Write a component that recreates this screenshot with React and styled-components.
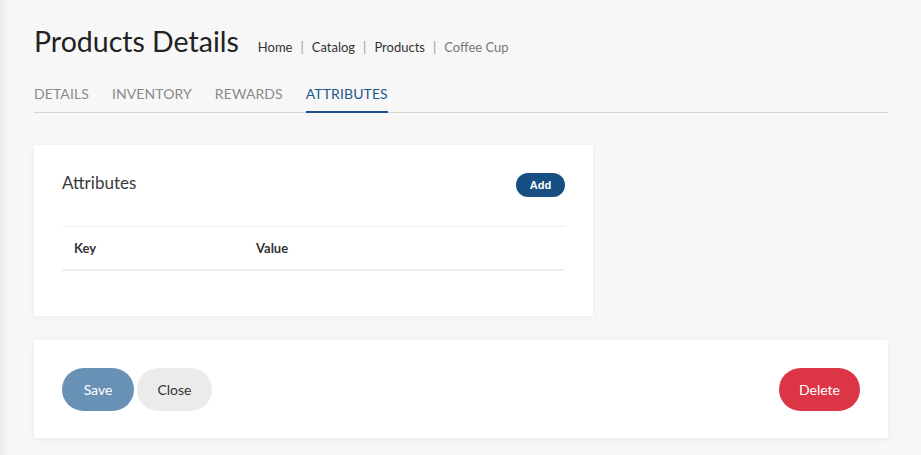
import React from "react";
import styled, { createGlobalStyle } from "styled-components";

const Global = createGlobalStyle`
  html, body { margin: 0; padding: 0; background: #f7f7f7; }
  body { font-family: Lato, "Noto Sans", sans-serif; color: #212529; }
  * { box-sizing: border-box; }
`;

const Page = styled.div`
  min-height: 455px;
  padding: 23px 33px 17px 34px;
  background: #f7f7f7;
  box-shadow: inset 12px 0 12px -10px rgba(0, 0, 0, 0.08);
`;

const Header = styled.div`
  display: flex;
  align-items: baseline;
  gap: 19px;
`;

const Title = styled.h1`
  margin: 0;
  font-size: 28.5px;
  font-weight: 400;
  color: #222;
  line-height: 36px;
`;

const Crumbs = styled.nav`
  display: flex;
  align-items: baseline;
  gap: 8px;
  font-size: 13px;
  color: #333;
`;

const Crumb = styled.span`
  color: ${(p) => (p.$current ? "#777" : "#333")};
`;

const Sep = styled.span`
  color: #999;
`;

const Tabs = styled.div`
  display: flex;
  gap: 23px;
  margin-top: 22px;
  border-bottom: 1px solid #d4d4d4;
`;

const Tab = styled.div`
  font-size: 14px;
  letter-spacing: 0.1px;
  text-transform: uppercase;
  padding: 4px 0 9px;
  color: ${(p) => (p.$active ? "#23578a" : "#8a8a8a")};
  border-bottom: 2px solid ${(p) => (p.$active ? "#1d5088" : "transparent")};
  margin-bottom: -1px;
`;

const Card = styled.section`
  background: #fff;
  box-shadow: 0 1px 6px rgba(0, 0, 0, 0.06);
  width: ${(p) => p.$width || "auto"};
  margin-top: ${(p) => p.$mt || 0}px;
  padding: ${(p) => p.$pad};
`;

const CardHead = styled.div`
  display: flex;
  justify-content: space-between;
  align-items: center;
  height: 28px;
`;

const CardTitle = styled.h2`
  margin: -3px 0 0;
  font-size: 17px;
  font-weight: 400;
  color: #3a3a3a;
`;

const AddButton = styled.button`
  border: none;
  background: #174f83;
  color: #fff;
  font-family: "Liberation Sans", Arial, sans-serif;
  font-weight: 700;
  font-size: 11px;
  height: 24px;
  width: 49px;
  border-radius: 12px;
  margin-top: 2px;
`;

const Table = styled.div`
  margin-top: 28px;
  border-top: 1px solid #efefef;
  border-bottom: 2px solid #efefef;
  display: grid;
  grid-template-columns: 182px 1fr;
  height: 45px;
  align-items: center;
  padding-left: 12px;
`;

const Th = styled.div`
  font-size: 13px;
  font-weight: 700;
  color: #333;
`;

const Actions = styled.div`
  display: flex;
  align-items: center;
`;

const Spacer = styled.div`
  flex: 1;
`;

const Btn = styled.button`
  border: none;
  height: 43px;
  border-radius: 22px;
  padding: 0;
  width: ${(p) => p.$w}px;
  margin-right: ${(p) => p.$mr || 0}px;
  background: ${(p) => p.$bg};
  color: ${(p) => p.$fg};
  font-family: Lato, "Noto Sans", sans-serif;
  font-size: 14px;
`;

export default function App() {
  return (
    <>
      <Global />
      <Page>
        <Header>
          <Title>Products Details</Title>
          <Crumbs>
            <Crumb>Home</Crumb>
            <Sep>|</Sep>
            <Crumb>Catalog</Crumb>
            <Sep>|</Sep>
            <Crumb>Products</Crumb>
            <Sep>|</Sep>
            <Crumb $current>Coffee Cup</Crumb>
          </Crumbs>
        </Header>
        <Tabs>
          <Tab>Details</Tab>
          <Tab>Inventory</Tab>
          <Tab>Rewards</Tab>
          <Tab $active>Attributes</Tab>
        </Tabs>
        <Card $width="559px" $mt={32} $pad="25px 28px 45px 28px">
          <CardHead>
            <CardTitle>Attributes</CardTitle>
            <AddButton>Add</AddButton>
          </CardHead>
          <Table>
            <Th>Key</Th>
            <Th>Value</Th>
          </Table>
        </Card>
        <Card $mt={24} $pad="28px 28px 27px 28px">
          <Actions>
            <Btn $w={72} $mr={3} $bg="#6891b5" $fg="#fff">Save</Btn>
            <Btn $w={75} $bg="#ebebeb" $fg="#333">Close</Btn>
            <Spacer />
            <Btn $w={81} $bg="#dc3545" $fg="#fff">Delete</Btn>
          </Actions>
        </Card>
      </Page>
    </>
  );
}
